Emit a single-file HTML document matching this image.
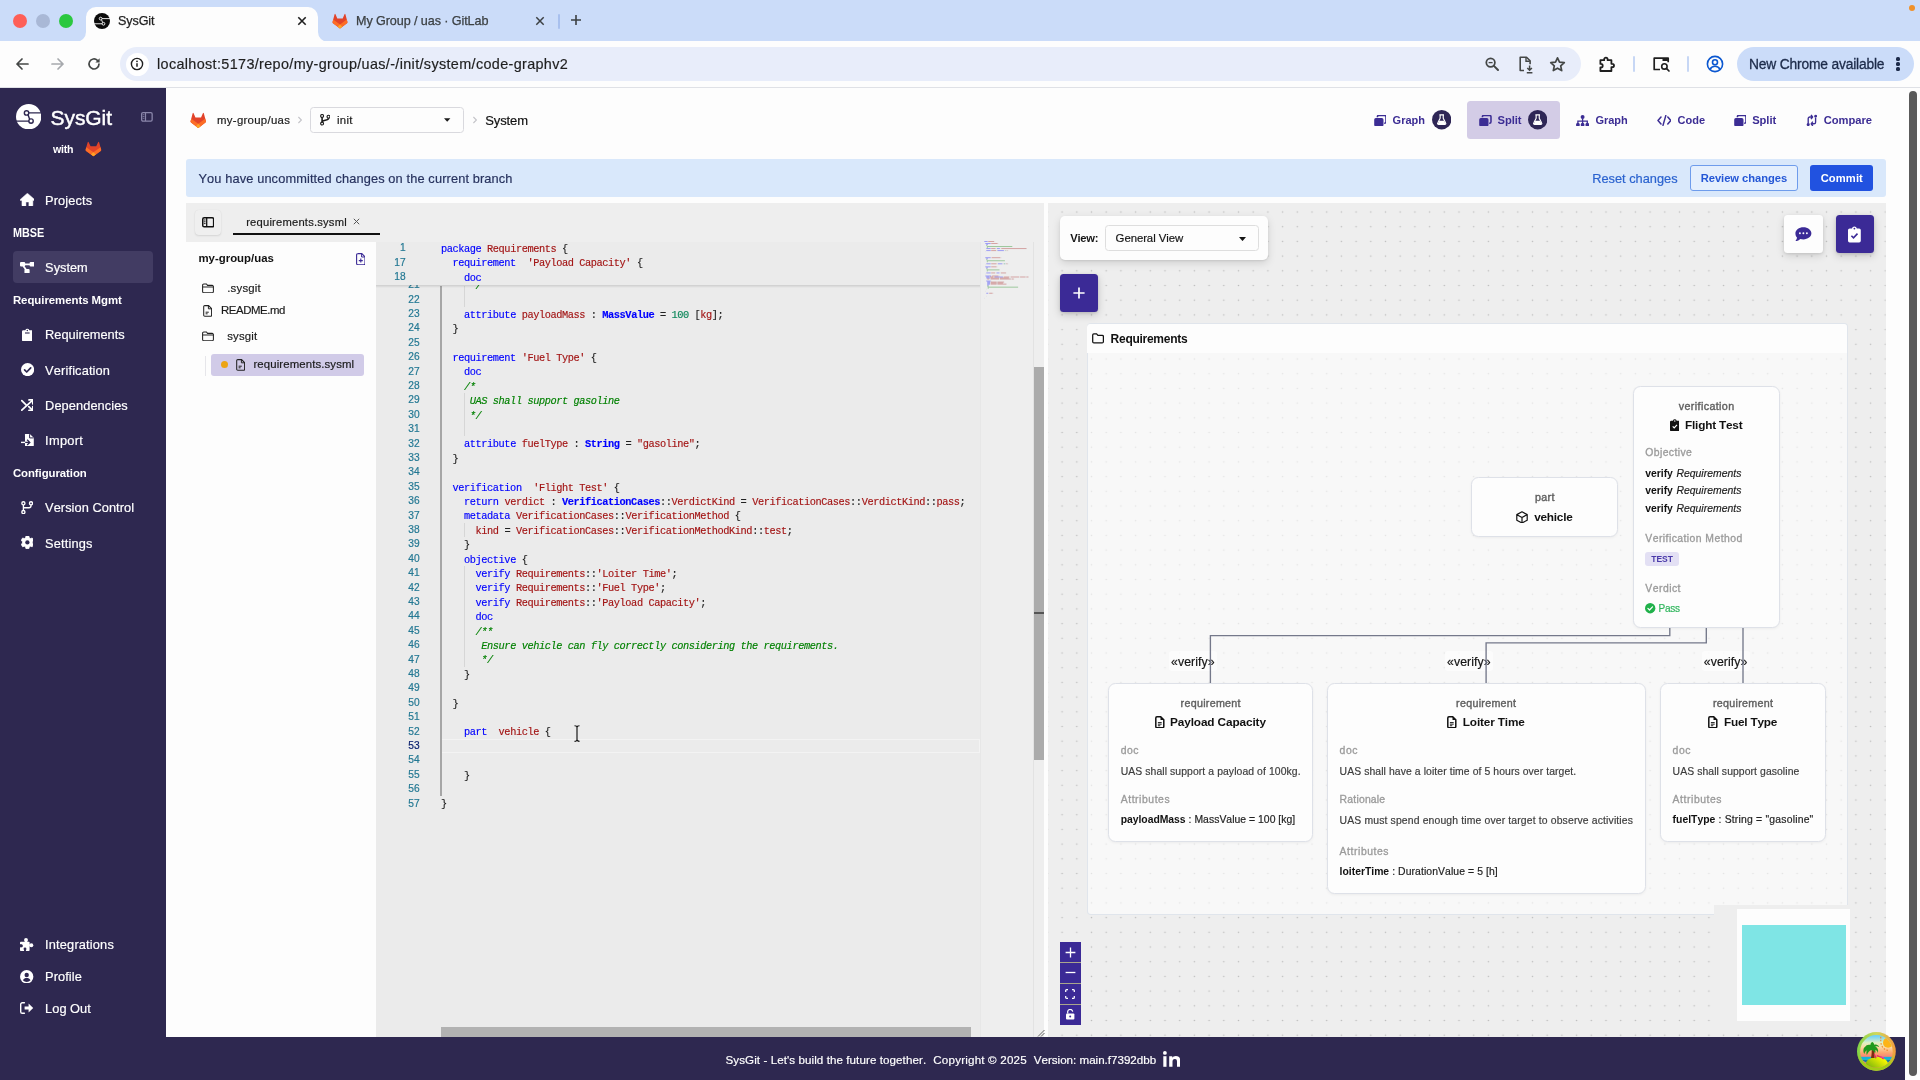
<!DOCTYPE html>
<html lang="en"><head><meta charset="utf-8"><title>SysGit</title>
<style>
*{box-sizing:border-box;margin:0;padding:0}
html,body{width:1920px;height:1080px;overflow:hidden;background:#fff}
body{font-family:"Liberation Sans",sans-serif;font-kerning:none;font-variant-ligatures:none;-webkit-font-smoothing:antialiased}
#root{position:relative;width:1920px;height:1080px;overflow:hidden;background:#fdfdfd;will-change:transform}
.b{position:absolute;display:block}
.t{position:absolute;white-space:pre;line-height:1;display:block}
.r{-webkit-text-stroke-width:.18px}
</style></head>
<body><div id="root">
<!-- s_chrome -->
<div class="b" style="left:0px;top:0px;width:1920px;height:41px;background:#cbdcf9;"></div>
<div class="b" style="left:0px;top:40.5px;width:1920px;height:47px;background:#fdfdfd;border-radius:9px 9px 0 0;"></div>
<div class="b" style="left:0px;top:87px;width:1920px;height:1px;background:#dfe1e6;"></div>
<svg class="b" style="left:76px;top:6px;" width="252" height="36" viewBox="0 0 252 36" preserveAspectRatio="none"><path d="M0 36 A10 10 0 0 0 10 26 V11 A10 10 0 0 1 20 1 H232 A10 10 0 0 1 242 11 V26 A10 10 0 0 0 252 36 Z" fill="#fdfdfd"/></svg>
<div class="b" style="left:13px;top:13.5px;width:14px;height:14px;background:#fe5f57;border-radius:50%;"></div>
<div class="b" style="left:36px;top:13.5px;width:14px;height:14px;background:#a9b8d6;border-radius:50%;"></div>
<div class="b" style="left:59px;top:13.5px;width:14px;height:14px;background:#2bc840;border-radius:50%;"></div>
<svg class="b" style="left:94.00px;top:13.00px;" width="16.00" height="16.00" viewBox="0 0 26 26" preserveAspectRatio="none"><circle cx="13" cy="13" r="13" fill="#0b0b0b"/><g fill="none" stroke="#ffffff" stroke-width="1.45"><path d="M11 9.100H26M0 17.500H15"/><path d="M12.200 10.700 14.100 15.800"/><circle cx="10.800" cy="9.100" r="2.250" fill="#0b0b0b"/><circle cx="15.400" cy="17.500" r="2.250" fill="#0b0b0b"/></g></svg>
<span class="t r" style="left:118.00px;top:15.24px;font-size:12.6px;color:#1f1f1f;letter-spacing:-0.121px;-webkit-text-stroke:.25px #1f1f1f;">SysGit</span>
<svg class="b" style="left:296px;top:15px;" width="12" height="12" viewBox="0 0 12 12" preserveAspectRatio="none"><path d="M2.3 2.3 9.7 9.7M9.7 2.3 2.3 9.7" stroke="#1f1f1f" stroke-width="1.6" fill="none"/></svg>
<svg class="b" style="left:332px;top:13px;" width="16" height="16" viewBox="0 0 16 16" preserveAspectRatio="none"><path d="M8 15.6 1 10.3Q.3 9.7.6 8.8L2.6 1.3Q3 .2 3.5 1.3L5.3 5.4H10.7L12.500 1.300Q13 .2 13.400 1.300L15.400 8.800Q15.700 9.700 15 10.300Z" fill="#e24329"/><path d="M.75 8.300 1.250 6.500 8 11.500 14.750 6.500 15.250 8.300Q15.700 9.700 15 10.300L8 15.600 1 10.300Q.3 9.700.750 8.300Z" fill="#fc6d26"/><path d="M8 11.500 10.300 13.850 8 15.600 5.700 13.850Z" fill="#fca326"/></svg>
<span class="t r" style="left:356.00px;top:15.24px;font-size:12.6px;color:#3c4043;letter-spacing:-0.089px;-webkit-text-stroke:.25px #3c4043;">My Group / uas · GitLab</span>
<svg class="b" style="left:534px;top:15px;" width="12" height="12" viewBox="0 0 12 12" preserveAspectRatio="none"><path d="M2.3 2.3 9.7 9.7M9.7 2.3 2.3 9.7" stroke="#3c4043" stroke-width="1.5" fill="none"/></svg>
<div class="b" style="left:558.3px;top:13.5px;width:1.4px;height:15px;background:#a8c0ee;border-radius:1px;"></div>
<svg class="b" style="left:570px;top:14px;" width="12" height="12" viewBox="0 0 12 12" preserveAspectRatio="none"><path d="M6 1v10M1 6h10" stroke="#3c4043" stroke-width="1.6" fill="none"/></svg>
<div class="b" style="left:1908.5px;top:4.5px;width:6px;height:6px;background:#f0912a;border-radius:50%;"></div>
<svg class="b" style="left:14px;top:56px;" width="16" height="16" viewBox="0 0 16 16" preserveAspectRatio="none"><path d="M14 8H3M8 3 3 8l5 5" stroke="#444746" stroke-width="1.7" fill="none" stroke-linecap="round" stroke-linejoin="round"/></svg>
<svg class="b" style="left:50px;top:56px;" width="16" height="16" viewBox="0 0 16 16" preserveAspectRatio="none"><path d="M2 8h11M8 3l5 5-5 5" stroke="#a6a9ad" stroke-width="1.7" fill="none" stroke-linecap="round" stroke-linejoin="round"/></svg>
<svg class="b" style="left:86px;top:56px;" width="16" height="16" viewBox="0 0 16 16" preserveAspectRatio="none"><path d="M13 8a5 5 0 1 1-1.6-3.7" stroke="#444746" stroke-width="1.7" fill="none" stroke-linecap="round"/><path d="M13.6 2.3v4.2H9.4z" fill="#444746"/></svg>
<div class="b" style="left:120px;top:47px;width:1461px;height:34px;background:#e8edfa;border-radius:17px;"></div>
<div class="b" style="left:125.5px;top:52.5px;width:23px;height:23px;background:#ffffff;border-radius:50%;"></div>
<svg class="b" style="left:130px;top:57px;" width="14" height="14" viewBox="0 0 14 14" preserveAspectRatio="none"><circle cx="7" cy="7" r="5.6" fill="none" stroke="#1f1f1f" stroke-width="1.4"/><path d="M7 6.2v3.6" stroke="#1f1f1f" stroke-width="1.5"/><circle cx="7" cy="4.3" r=".9" fill="#1f1f1f"/></svg>
<span class="t r" style="left:157.00px;top:56.97px;font-size:14.4px;color:#1f1f1f;letter-spacing:0.352px;">localhost:5173/repo/my-group/uas/-/init/system/code-graphv2</span>
<svg class="b" style="left:1484px;top:56px;" width="16" height="16" viewBox="0 0 16 16" preserveAspectRatio="none"><circle cx="6.6" cy="6.6" r="4.3" fill="none" stroke="#444746" stroke-width="1.750"/><path d="M9.900 9.900 14 14" stroke="#444746" stroke-width="2" stroke-linecap="round"/><path d="M4.6 6.6h4" stroke="#444746" stroke-width="1.3"/></svg>
<svg class="b" style="left:1517px;top:55px;" width="18" height="19" viewBox="0 0 18 19" preserveAspectRatio="none"><path d="M7 15.5H3.2V2.2h6.3l3.6 3.6v3.4" fill="none" stroke="#444746" stroke-width="1.6" stroke-linejoin="round"/><path d="M9 2.4v3.8h3.8" fill="none" stroke="#444746" stroke-width="1.4"/><path d="M12.6 10.5v4.6M10.3 13l2.3 2.3 2.3-2.3M9.8 17.8h5.6" fill="none" stroke="#444746" stroke-width="1.5"/></svg>
<svg class="b" style="left:1548.5px;top:55.5px;" width="17" height="17" viewBox="0 0 17 17" preserveAspectRatio="none"><path d="M8.5 1.8l2 4.4 4.8.5-3.6 3.2 1 4.7-4.2-2.4-4.2 2.4 1-4.7L1.7 6.7l4.8-.5z" fill="none" stroke="#444746" stroke-width="1.700" stroke-linejoin="round"/></svg>
<svg class="b" style="left:1598.4px;top:54.6px;" width="18" height="18" viewBox="0 0 18 18" preserveAspectRatio="none"><path d="M2.400 5.200h3.800V4.300a1.700 1.700 0 0 1 3.400 0v.9h3.800v3.600h.9a1.700 1.700 0 0 1 0 3.400h-.9v3.800H2.400v-3.500h.5a1.800 1.800 0 0 0 0-3.600h-.5z" fill="none" stroke="#1f1f1f" stroke-width="1.800" stroke-linejoin="round"/></svg>
<div class="b" style="left:1633.2px;top:56.4px;width:2px;height:15.4px;background:#c7d7f5;border-radius:1px;"></div>
<svg class="b" style="left:1652px;top:55px;" width="19" height="18" viewBox="0 0 19 18" preserveAspectRatio="none"><path d="M8 14.5H2.2V3.2h14v4" fill="none" stroke="#1f1f1f" stroke-width="1.7" stroke-linejoin="round"/><path d="M10.5 3.4h5.4v2.6h-5.4z" fill="#1f1f1f"/><circle cx="12.4" cy="11.4" r="2.7" fill="none" stroke="#1f1f1f" stroke-width="1.6"/><path d="M14.4 13.4l2.6 2.6" stroke="#1f1f1f" stroke-width="1.7" stroke-linecap="round"/></svg>
<div class="b" style="left:1687.2px;top:56.4px;width:2px;height:15.4px;background:#c7d7f5;border-radius:1px;"></div>
<svg class="b" style="left:1706px;top:55px;" width="18" height="18" viewBox="0 0 18 18" preserveAspectRatio="none"><circle cx="9" cy="9" r="7.6" fill="none" stroke="#0b57d0" stroke-width="1.6"/><circle cx="9" cy="7.2" r="2.5" fill="none" stroke="#0b57d0" stroke-width="1.6"/><path d="M4 14.4c1-2.2 2.8-3.1 5-3.1s4 .9 5 3.1" fill="none" stroke="#0b57d0" stroke-width="1.6"/></svg>
<div class="b" style="left:1737px;top:47px;width:177px;height:34px;background:#cbdcf9;border-radius:17px;"></div>
<span class="t r" style="left:1749.00px;top:58.26px;font-size:13.8px;color:#1d2b4a;letter-spacing:-0.175px;-webkit-text-stroke:.3px #1d2b4a;">New Chrome available</span>
<div class="b" style="left:1896.4px;top:57.4px;width:3.2px;height:3.2px;background:#1d2b4a;border-radius:50%;"></div>
<div class="b" style="left:1896.4px;top:62.4px;width:3.2px;height:3.2px;background:#1d2b4a;border-radius:50%;"></div>
<div class="b" style="left:1896.4px;top:67.4px;width:3.2px;height:3.2px;background:#1d2b4a;border-radius:50%;"></div>
<!-- s_sidebar -->
<div class="b" style="left:0px;top:88px;width:166.3px;height:992px;background:#2e2850;"></div>
<svg class="b" style="left:15.80px;top:103.90px;" width="25.40" height="25.40" viewBox="0 0 26 26" preserveAspectRatio="none"><circle cx="13" cy="13" r="13" fill="#ffffff"/><g fill="none" stroke="#2e2850" stroke-width="1.45"><path d="M11 9.100H26M0 17.500H15"/><path d="M12.200 10.700 14.100 15.800"/><circle cx="10.800" cy="9.100" r="2.250" fill="#ffffff"/><circle cx="15.400" cy="17.500" r="2.250" fill="#ffffff"/></g></svg>
<span class="t r" style="left:50.60px;top:107.04px;font-size:21.0px;color:#ffffff;letter-spacing:-0.088px;-webkit-text-stroke:.45px #fff;">SysGit</span>
<svg class="b" style="left:141.1px;top:112.0px;" width="11.8" height="9.8" viewBox="0 0 11.8 9.8" preserveAspectRatio="none"><rect x=".65" y=".65" width="10.5" height="8.5" rx="1.3" fill="none" stroke="#8a86aa" stroke-width="1.3"/><path d="M4.5 .8v8.200" stroke="#8a86aa" stroke-width="1.2"/><path d="M1.700 2.700h1.700M1.700 4.500h1.700M1.700 6.300h1.700" stroke="#8a86aa" stroke-width=".8"/></svg>
<span class="t" style="left:53.00px;top:143.62px;font-size:10.6px;color:#ffffff;font-weight:700;letter-spacing:-0.232px;">with</span>
<svg class="b" style="left:84.8px;top:141.3px;overflow:visible" width="16.8" height="15.6" viewBox="0 0 16 16" preserveAspectRatio="none"><path d="M8 15.6 1 10.3Q.3 9.7.6 8.8L2.6 1.3Q3 .2 3.5 1.3L5.3 5.4H10.7L12.500 1.300Q13 .2 13.400 1.300L15.400 8.800Q15.700 9.700 15 10.300Z" fill="#e24329"/><path d="M.75 8.300 1.250 6.500 8 11.500 14.750 6.500 15.250 8.300Q15.700 9.700 15 10.300L8 15.600 1 10.300Q.3 9.700.750 8.300Z" fill="#fc6d26"/><path d="M8 11.500 10.300 13.850 8 15.600 5.700 13.850Z" fill="#fca326"/></svg>
<div class="b" style="left:12.9px;top:251.2px;width:140.6px;height:31.6px;background:#423c63;border-radius:4px;"></div>
<svg class="b" style="left:19.6px;top:193.1px;" width="14.8" height="13.2" viewBox="0 0 16 14" preserveAspectRatio="none"><path d="M8 .2 .3 6.800a.7.7 0 0 0 .5 1.200h1.300v5.200a.6.6 0 0 0 .6.6h3.700V9.600h3.200v4.200h3.700a.6.6 0 0 0 .6-.6V8h1.300a.7.700 0 0 0 .5-1.200z" fill="#ffffff" stroke="#ffffff" stroke-width=".5" stroke-linejoin="round"/></svg>
<span class="t r" style="left:45.10px;top:195.35px;font-size:12.8px;color:#ffffff;letter-spacing:0.109px;">Projects</span>
<svg class="b" style="left:19.7px;top:261.5px;" width="14.8" height="11.6" viewBox="0 0 16 12.600" preserveAspectRatio="none"><g fill="#ffffff"><rect x="0" y="0" width="5.600" height="5" rx="1.200"/><rect x="10.400" y="0" width="5.600" height="5" rx="1.200"/><rect x="4.800" y="7.600" width="5.600" height="5" rx="1.200"/></g><path d="M5 2.500h6M3.600 4.400l3.400 4.600" stroke="#ffffff" stroke-width="1.900" fill="none"/></svg>
<span class="t r" style="left:45.10px;top:262.35px;font-size:12.8px;color:#ffffff;">System</span>
<svg class="b" style="left:21.7px;top:327.7px;" width="10.6" height="13.4" viewBox="0 0 10.6 13.4" preserveAspectRatio="none"><path d="M1.4 2.2h1.9a2.1 2.1 0 0 1 4 0h1.9a1.4 1.4 0 0 1 1.4 1.4V12a1.4 1.4 0 0 1-1.4 1.4H1.4A1.4 1.4 0 0 1 0 12V3.6a1.4 1.4 0 0 1 1.4-1.4z" fill="#ffffff"/><circle cx="5.3" cy="2.4" r=".75" fill="#2e2850"/><path d="M3 5h4.6" stroke="#2e2850" stroke-width="1.1"/></svg>
<span class="t r" style="left:45.10px;top:329.25px;font-size:12.8px;color:#ffffff;letter-spacing:-0.007px;">Requirements</span>
<svg class="b" style="left:20.5px;top:363.2px;" width="13.2" height="13.2" viewBox="0 0 13.2 13.2" preserveAspectRatio="none"><circle cx="6.6" cy="6.6" r="6.6" fill="#ffffff"/><path d="M3.6 6.9l2.1 2.1 4-4.2" stroke="#2e2850" stroke-width="1.7" fill="none" stroke-linecap="round" stroke-linejoin="round"/></svg>
<span class="t r" style="left:45.10px;top:364.75px;font-size:12.8px;color:#ffffff;letter-spacing:0.144px;">Verification</span>
<svg class="b" style="left:20.7px;top:398.8px;" width="12.8" height="12.4" viewBox="0 0 12.8 12.4" preserveAspectRatio="none"><g stroke="#ffffff" stroke-width="1.750" fill="none" stroke-linecap="round" stroke-linejoin="round"><path d="M.8 1.6l4 4M7.8 7.6l3.4 3.4M.8 11.2 11.4 1.4"/><path d="M8 1h3.8v3.8M8 11.4h3.8V7.6"/></g></svg>
<span class="t r" style="left:45.10px;top:399.85px;font-size:12.8px;color:#ffffff;letter-spacing:0.078px;">Dependencies</span>
<svg class="b" style="left:20.6px;top:433.6px;" width="13" height="12.8" viewBox="0 0 13 12.8" preserveAspectRatio="none"><path d="M4.2 0h4.6l4 3.8v7.4a1.6 1.6 0 0 1-1.6 1.6H5.6A1.6 1.6 0 0 1 4 11.2V9.1h3.2l-1.5 1.5.9.9 3.1-3.1-3.1-3.1-.9.9L7.2 7.7H4V1.6A1.6 1.6 0 0 1 4.2 0z" fill="#ffffff"/><path d="M0 8.4h4.2" stroke="#ffffff" stroke-width="1.4"/><path d="M8.6.2v3.7h4" stroke="#2e2850" stroke-width="1" fill="none"/></svg>
<span class="t r" style="left:45.10px;top:435.25px;font-size:12.8px;color:#ffffff;letter-spacing:0.305px;">Import</span>
<svg class="b" style="left:20.8px;top:500.8px;" width="12.4" height="13.4" viewBox="0 0 12.4 13.4" preserveAspectRatio="none"><g stroke="#ffffff" stroke-width="1.35" fill="none"><circle cx="2.4" cy="2.3" r="1.55"/><circle cx="2.4" cy="11.1" r="1.55"/><circle cx="10" cy="2.3" r="1.55"/><path d="M2.4 3.900v5.600M10 3.900v.9a2 2 0 0 1-2 2H2.400"/></g></svg>
<span class="t r" style="left:45.10px;top:502.35px;font-size:12.8px;color:#ffffff;letter-spacing:0.049px;">Version Control</span>
<svg class="b" style="left:20.7px;top:536.2px;" width="12.8" height="12.8" viewBox="0 0 12.8 12.8" preserveAspectRatio="none"><path d="M12.74 4.98 L12.74 7.82 L10.96 8.20 L10.24 9.44 L10.80 11.18 L8.34 12.60 L7.12 11.25 L5.68 11.25 L4.46 12.60 L2.00 11.18 L2.56 9.44 L1.84 8.20 L0.06 7.82 L0.06 4.98 L1.84 4.60 L2.56 3.36 L2.00 1.62 L4.46 0.20 L5.68 1.55 L7.12 1.55 L8.34 0.20 L10.80 1.62 L10.24 3.36 L10.96 4.60Z" fill="#ffffff" stroke="#ffffff" stroke-width=".7" stroke-linejoin="round" transform="rotate(30 6.400 6.400)"/><circle cx="6.400" cy="6.400" r="2.150" fill="#2e2850"/></svg>
<span class="t r" style="left:45.10px;top:537.55px;font-size:12.8px;color:#ffffff;letter-spacing:0.150px;">Settings</span>
<svg class="b" style="left:20.2px;top:937.8px;" width="13.4" height="13" viewBox="0 0 13.4 13" preserveAspectRatio="none"><g fill="#ffffff"><rect x="0" y="3.800" width="9.600" height="9.200" rx=".8"/><circle cx="6" cy="2.050" r="1.950"/><rect x="4.900" y="2.100" width="2.200" height="2"/><circle cx="11.350" cy="7.300" r="1.950"/><rect x="9.400" y="6.200" width="2" height="2.200"/></g><g fill="#2e2850"><circle cx="1.400" cy="7.800" r="1.500"/><rect x="-.1" y="6.300" width="1.500" height="3"/><circle cx="5" cy="10.900" r="1.450"/><rect x="4.050" y="10.900" width="1.900" height="2.200"/></g></svg>
<span class="t r" style="left:45.10px;top:939.35px;font-size:12.8px;color:#ffffff;letter-spacing:0.165px;">Integrations</span>
<svg class="b" style="left:20.4px;top:969.9px;" width="13.4" height="13.4" viewBox="0 0 13.4 13.4" preserveAspectRatio="none"><circle cx="6.7" cy="6.7" r="6.7" fill="#ffffff"/><circle cx="6.7" cy="5" r="2.2" fill="#2e2850"/><path d="M2.9 10.3c.8-1.7 2.2-2.3 3.8-2.3s3 .6 3.8 2.3a5.2 5.2 0 0 1-7.6 0z" fill="#2e2850"/></svg>
<span class="t r" style="left:45.10px;top:971.35px;font-size:12.8px;color:#ffffff;letter-spacing:0.070px;">Profile</span>
<svg class="b" style="left:20.3px;top:1002.3px;" width="13.6" height="12" viewBox="0 0 13.6 12" preserveAspectRatio="none"><path d="M4.4.7H2.3A1.6 1.6 0 0 0 .7 2.3v7.4a1.6 1.6 0 0 0 1.6 1.6h2.1" stroke="#ffffff" stroke-width="1.4" fill="none" stroke-linecap="round"/><path d="M8.6 1.6 13.2 6l-4.6 4.4V7.6H4.6V4.4h4z" fill="#ffffff"/></svg>
<span class="t r" style="left:45.10px;top:1003.35px;font-size:12.8px;color:#ffffff;letter-spacing:0.026px;">Log Out</span>
<span class="t" style="left:12.90px;top:227.14px;font-size:12.4px;color:#ffffff;font-weight:700;transform:scaleX(0.8737);transform-origin:0 50%;">MBSE</span>
<span class="t" style="left:12.90px;top:295.03px;font-size:11.4px;color:#ffffff;font-weight:700;letter-spacing:-0.030px;">Requirements Mgmt</span>
<span class="t" style="left:12.90px;top:468.23px;font-size:11.4px;color:#ffffff;font-weight:700;letter-spacing:-0.068px;">Configuration</span>
<!-- s_header -->
<svg class="b" style="left:190px;top:111.5px;" width="16.5" height="16.5" viewBox="0 0 16 16" preserveAspectRatio="none"><path d="M8 15.6 1 10.3Q.3 9.7.6 8.8L2.6 1.3Q3 .2 3.5 1.3L5.3 5.4H10.7L12.500 1.300Q13 .2 13.400 1.300L15.400 8.800Q15.700 9.700 15 10.300Z" fill="#e24329"/><path d="M.75 8.300 1.250 6.500 8 11.500 14.750 6.500 15.250 8.300Q15.700 9.700 15 10.300L8 15.600 1 10.300Q.3 9.700.750 8.300Z" fill="#fc6d26"/><path d="M8 11.500 10.300 13.850 8 15.600 5.700 13.850Z" fill="#fca326"/></svg>
<span class="t r" style="left:217.00px;top:114.63px;font-size:11.4px;color:#1a1a1a;letter-spacing:0.300px;">my-group/uas</span>
<svg class="b" style="left:296.5px;top:116px;" width="6" height="8" viewBox="0 0 6 8" preserveAspectRatio="none"><path d="M1.4 1l3 3-3 3" stroke="#c3c3c8" stroke-width="1.1" fill="none"/></svg>
<div class="b" style="left:310px;top:107px;width:153.6px;height:25.6px;background:#fdfdfd;border:1px solid #d9d9de;border-radius:3.5px;"></div>
<svg class="b" style="left:319.6px;top:114.3px;" width="10.6" height="11.6" viewBox="0 0 10.6 11.6" preserveAspectRatio="none"><g stroke="#1a1a1a" fill="none"><g stroke-width="1.15"><circle cx="2.1" cy="2" r="1.45"/><circle cx="2.1" cy="9.6" r="1.45"/><circle cx="8.5" cy="2.7" r="1.45"/></g><path d="M2.1 3.5v4.6M8.5 4.2c0 2.600-6.400 1.600-6.400 4" stroke-width="1.6"/></g></svg>
<span class="t r" style="left:337.00px;top:114.63px;font-size:11.4px;color:#1a1a1a;letter-spacing:0.309px;">init</span>
<svg class="b" style="left:444.3px;top:118.2px;" width="6.4" height="4" viewBox="0 0 7 4.400" preserveAspectRatio="none"><path d="M0 .2h7L3.500 4.200z" fill="#1a1a1a"/></svg>
<svg class="b" style="left:471.5px;top:116px;" width="6" height="8" viewBox="0 0 6 8" preserveAspectRatio="none"><path d="M1.4 1l3 3-3 3" stroke="#c3c3c8" stroke-width="1.1" fill="none"/></svg>
<span class="t r" style="left:485.20px;top:114.05px;font-size:13.0px;color:#111;letter-spacing:-0.108px;">System</span>
<div class="b" style="left:1466.7px;top:101.2px;width:93px;height:37.6px;background:#d3cce6;border-radius:3.5px;"></div>
<svg class="b" style="left:1373.8px;top:114.8px;" width="12.4" height="11.6" viewBox="0 0 12.4 11.6" preserveAspectRatio="none"><path d="M3.4 2.2V1.8A1.4 1.4 0 0 1 4.8.4h5.8A1.4 1.4 0 0 1 12 1.8v5a1.4 1.4 0 0 1-1.4 1.4h-.4" fill="none" stroke="#3c2d94" stroke-width="1.55"/><rect x=".2" y="3" width="9.300" height="8.400" rx="1.700" fill="#3c2d94"/></svg>
<span class="t" style="left:1392.60px;top:115.43px;font-size:11.0px;color:#3c2d94;font-weight:700;">Graph</span>
<svg class="b" style="left:1431.50px;top:110.40px;" width="19.4" height="19.4" viewBox="0 0 20 20" preserveAspectRatio="none"><circle cx="10" cy="10" r="10" fill="#2e2656"/><path d="M7.6 5h4.8M8.4 5v3.6L5.9 13.4a1 1 0 0 0 .9 1.5h6.4a1 1 0 0 0 .9-1.5L11.6 8.6V5" fill="none" stroke="#fff" stroke-width="1.2" stroke-linejoin="round"/><path d="M7.6 11h4.8l1.3 2.6a.6.6 0 0 1-.5.9H6.8a.6.6 0 0 1-.5-.9z" fill="#fff"/></svg>
<svg class="b" style="left:1479.2px;top:114.8px;" width="12.4" height="11.6" viewBox="0 0 12.4 11.6" preserveAspectRatio="none"><path d="M3.4 2.2V1.8A1.4 1.4 0 0 1 4.8.4h5.8A1.4 1.4 0 0 1 12 1.8v5a1.4 1.4 0 0 1-1.4 1.4h-.4" fill="none" stroke="#3c2d94" stroke-width="1.55"/><rect x=".2" y="3" width="9.300" height="8.400" rx="1.700" fill="#3c2d94"/></svg>
<span class="t" style="left:1497.60px;top:115.33px;font-size:11.2px;color:#3c2d94;font-weight:700;letter-spacing:-0.066px;">Split</span>
<svg class="b" style="left:1528.00px;top:110.40px;" width="19.4" height="19.4" viewBox="0 0 20 20" preserveAspectRatio="none"><circle cx="10" cy="10" r="10" fill="#2e2656"/><path d="M7.6 5h4.8M8.4 5v3.6L5.9 13.4a1 1 0 0 0 .9 1.5h6.4a1 1 0 0 0 .9-1.5L11.6 8.6V5" fill="none" stroke="#fff" stroke-width="1.2" stroke-linejoin="round"/><path d="M7.6 11h4.8l1.3 2.6a.6.6 0 0 1-.5.9H6.8a.6.6 0 0 1-.5-.9z" fill="#fff"/></svg>
<svg class="b" style="left:1575.6px;top:114.6px;" width="13.2" height="11.8" viewBox="0 0 13.2 11.8" preserveAspectRatio="none"><g fill="#3c2d94"><circle cx="6.6" cy="2" r="2"/><circle cx="1.900" cy="9.700" r="1.900"/><circle cx="6.600" cy="9.700" r="1.900"/><circle cx="11.300" cy="9.700" r="1.900"/></g><path d="M6.600 3.400v5M1.900 8.200V6.200h9.400v2" stroke="#3c2d94" stroke-width="1.300" fill="none"/></svg>
<span class="t" style="left:1595.60px;top:115.43px;font-size:11.0px;color:#3c2d94;font-weight:700;letter-spacing:-0.098px;">Graph</span>
<svg class="b" style="left:1656.6px;top:114.6px;" width="14.8" height="11" viewBox="0 0 14.8 11" preserveAspectRatio="none"><path d="M4 2 1 5.5 4 9M10.8 2l3 3.5-3 3.5M8.8.6 6 10.4" stroke="#3c2d94" stroke-width="1.5" fill="none" stroke-linecap="round" stroke-linejoin="round"/></svg>
<span class="t" style="left:1677.60px;top:115.43px;font-size:11.0px;color:#3c2d94;font-weight:700;letter-spacing:-0.033px;">Code</span>
<svg class="b" style="left:1734px;top:114.8px;" width="12.4" height="11.6" viewBox="0 0 12.4 11.6" preserveAspectRatio="none"><path d="M3.4 2.2V1.8A1.4 1.4 0 0 1 4.8.4h5.8A1.4 1.4 0 0 1 12 1.8v5a1.4 1.4 0 0 1-1.4 1.4h-.4" fill="none" stroke="#3c2d94" stroke-width="1.55"/><rect x=".2" y="3" width="9.300" height="8.400" rx="1.700" fill="#3c2d94"/></svg>
<span class="t" style="left:1752.20px;top:115.33px;font-size:11.2px;color:#3c2d94;font-weight:700;letter-spacing:-0.066px;">Split</span>
<svg class="b" style="left:1805.6px;top:113.6px;" width="11.8" height="12.8" viewBox="0 0 11.8 12.8" preserveAspectRatio="none"><g stroke="#3c2d94" stroke-width="1.35" fill="none" stroke-linejoin="round"><path d="M2.2 9V4.6a1.6 1.6 0 0 1 1.6-1.6h2.4M5 .8l1.6 2.2L5 5.2"/><path d="M9.6 3.8v4.4a1.6 1.6 0 0 1-1.6 1.6H5.6M6.8 7.6 5.2 9.8l1.6 2.2"/></g><circle cx="2.2" cy="10.6" r="1.5" fill="#3c2d94"/><circle cx="9.6" cy="2.2" r="1.5" fill="#3c2d94"/></svg>
<span class="t" style="left:1823.80px;top:115.33px;font-size:11.2px;color:#3c2d94;font-weight:700;letter-spacing:-0.058px;">Compare</span>
<div class="b" style="left:185.6px;top:158.8px;width:1700.2px;height:38px;background:#d9e8fb;border-radius:3px;"></div>
<span class="t r" style="left:198.40px;top:172.85px;font-size:12.8px;color:#27325e;letter-spacing:0.124px;">You have uncommitted changes on the current branch</span>
<span class="t r" style="left:1592.20px;top:172.65px;font-size:12.8px;color:#2a62cf;">Reset changes</span>
<div class="b" style="left:1690px;top:165px;width:108px;height:25.6px;background:#e4effd;border:1px solid #6e9cec;border-radius:3px;"></div>
<span class="t" style="left:1700.70px;top:172.93px;font-size:11.2px;color:#2457d6;font-weight:700;letter-spacing:-0.042px;">Review changes</span>
<div class="b" style="left:1810.4px;top:165px;width:62.8px;height:25.6px;background:#2152e0;border-radius:3px;"></div>
<span class="t" style="left:1820.70px;top:172.93px;font-size:11.2px;color:#ffffff;font-weight:700;letter-spacing:0.102px;">Commit</span>
<div class="b" style="left:1886px;top:88px;width:34px;height:992px;background:#fdfdfd;"></div>
<div class="b" style="left:1909.0px;top:91px;width:8.0px;height:985px;background:#5a5a5a;border-radius:4px;"></div>
<!-- s_editor -->
<div class="b" style="left:185.6px;top:203px;width:858.6px;height:38.6px;background:#eeeeee;"></div>
<div class="b" style="left:194.6px;top:210px;width:26.4px;height:25px;background:#efefef;border-radius:4px;box-shadow:0 1px 2px rgba(0,0,0,.10),0 0 1px rgba(0,0,0,.08);"></div>
<svg class="b" style="left:201.8px;top:217.2px;" width="12.4" height="10.6" viewBox="0 0 12.4 10.6" preserveAspectRatio="none"><rect x=".75" y=".75" width="10.900" height="9.100" rx="1.400" fill="none" stroke="#111" stroke-width="1.500"/><path d="M4.700 .8v9" stroke="#111" stroke-width="1.300"/><path d="M1.900 3h1.700M1.900 4.800h1.700M1.900 6.600h1.700" stroke="#111" stroke-width=".9"/></svg>
<span class="t r" style="left:246.20px;top:216.53px;font-size:11.2px;color:#1a1a1a;letter-spacing:0.206px;">requirements.sysml</span>
<svg class="b" style="left:353.4px;top:218.2px;" width="7" height="7" viewBox="0 0 7 7" preserveAspectRatio="none"><path d="M.8.8l5.4 5.4M6.2.8.8 6.2" stroke="#555" stroke-width="1" fill="none"/></svg>
<div class="b" style="left:233.4px;top:233px;width:146.4px;height:2px;background:#111111;"></div>
<div class="b" style="left:185.6px;top:241.6px;width:190.8px;height:795.4px;background:#fdfdfd;"></div>
<span class="t" style="left:198.40px;top:253.43px;font-size:11.4px;color:#111;font-weight:700;letter-spacing:0.020px;">my-group/uas</span>
<svg class="b" style="left:355.6px;top:252.6px;" width="9.6" height="12.4" viewBox="0 0 9.6 12.4" preserveAspectRatio="none"><path d="M1.6.6h4.2l3.2 3.2v6.8a1.2 1.2 0 0 1-1.2 1.2H1.8A1.2 1.2 0 0 1 .6 10.6V1.8A1.2 1.2 0 0 1 1.8.6z" fill="none" stroke="#3b2a96" stroke-width="1.1"/><path d="M5.6.8v3.2h3.2" fill="none" stroke="#3b2a96" stroke-width="1"/><path d="M4.8 5.6v4M2.8 7.6h4" stroke="#3b2a96" stroke-width="1.1"/></svg>
<svg class="b" style="left:202px;top:282.6px;" width="12" height="10.6" viewBox="0 0 12 10.6" preserveAspectRatio="none"><path d="M.6 2.2A1.2 1.2 0 0 1 1.8 1h2.6l1.2 1.4h4.6a1.2 1.2 0 0 1 1.2 1.2v5A1.2 1.2 0 0 1 10.2 9.8H1.8A1.2 1.2 0 0 1 .6 8.6z" fill="none" stroke="#222" stroke-width="1.05"/><path d="M.8 4h10.4" stroke="#222" stroke-width="1"/></svg>
<span class="t r" style="left:227.20px;top:282.83px;font-size:11.4px;color:#1a1a1a;letter-spacing:0.215px;">.sysgit</span>
<svg class="b" style="left:203px;top:304.8px;" width="9.4" height="12" viewBox="0 0 9.4 12" preserveAspectRatio="none"><path d="M1.8.6h3.8l3 3v6.6a1.1 1.1 0 0 1-1.1 1.1H1.8A1.1 1.1 0 0 1 .7 10.2V1.7A1.1 1.1 0 0 1 1.8.6z" fill="none" stroke="#222" stroke-width="1.05"/><path d="M5.4.8v3h3" fill="none" stroke="#222" stroke-width="1"/><path d="M2.6 7.2h3.2M2.6 8.8h2" stroke="#222" stroke-width="1"/></svg>
<span class="t r" style="left:221.00px;top:305.43px;font-size:11.4px;color:#1a1a1a;letter-spacing:-0.422px;">README.md</span>
<svg class="b" style="left:202px;top:330.8px;" width="12" height="10.6" viewBox="0 0 12 10.6" preserveAspectRatio="none"><path d="M.6 2.2A1.2 1.2 0 0 1 1.8 1h2.6l1.2 1.4h4.6a1.2 1.2 0 0 1 1.2 1.2v5A1.2 1.2 0 0 1 10.2 9.8H1.8A1.2 1.2 0 0 1 .6 8.6z" fill="none" stroke="#222" stroke-width="1.05"/><path d="M.8 4h10.4" stroke="#222" stroke-width="1"/></svg>
<span class="t r" style="left:227.20px;top:331.03px;font-size:11.4px;color:#1a1a1a;letter-spacing:0.172px;">sysgit</span>
<div class="b" style="left:205.4px;top:356px;width:1px;height:20px;background:#e6e6ea;"></div>
<div class="b" style="left:211.2px;top:353.6px;width:152.8px;height:22.2px;background:#d1cbe8;border-radius:3px;"></div>
<div class="b" style="left:221px;top:361px;width:7px;height:7px;background:#eca413;border-radius:50%;"></div>
<svg class="b" style="left:235.8px;top:358.8px;" width="9.4" height="12" viewBox="0 0 9.4 12" preserveAspectRatio="none"><path d="M1.8.6h3.8l3 3v6.6a1.1 1.1 0 0 1-1.1 1.1H1.8A1.1 1.1 0 0 1 .7 10.2V1.7A1.1 1.1 0 0 1 1.8.6z" fill="none" stroke="#222" stroke-width="1.05"/><path d="M5.4.8v3h3" fill="none" stroke="#222" stroke-width="1"/><path d="M2.6 7.2h3.2M2.6 8.8h2" stroke="#222" stroke-width="1"/></svg>
<span class="t r" style="left:253.40px;top:359.03px;font-size:11.4px;color:#1a1a1a;letter-spacing:0.116px;">requirements.sysml</span>
<div class="b" style="left:376.4px;top:241.8px;width:667.8px;height:795.2px;background:#ebebeb;"></div>
<div class="b" style="left:441px;top:739.4px;width:539px;height:13.6px;background:transparent;border:1px solid #f3f3f3;border-left:0;"></div>
<div class="b" style="left:440.4px;top:286px;width:1.6px;height:510.4px;background:#a6a6a6;"></div>
<div class="b" style="left:463.85px;top:286.00px;width:1px;height:20.80px;background:#d6d6d6;"></div>
<div class="b" style="left:463.85px;top:393.20px;width:1px;height:43.20px;background:#d6d6d6;"></div>
<div class="b" style="left:463.85px;top:522.80px;width:1px;height:14.40px;background:#d6d6d6;"></div>
<div class="b" style="left:463.85px;top:566.00px;width:1px;height:100.80px;background:#d6d6d6;"></div>
<style>.m{font-family:"Liberation Mono",monospace;font-size:10.3px;letter-spacing:-0.419px;-webkit-text-stroke-width:.15px}</style>
<span class="t r" style="left:408.28px;top:280.28px;font-size:10.2px;color:#237893;font-family:"Liberation Mono",monospace;letter-spacing:-0.718px;">21</span>
<span class="t m" style="left:469.81px;top:280.91px;color:#008000;font-style:italic;">*/</span>
<span class="t r" style="left:408.28px;top:294.68px;font-size:10.2px;color:#237893;font-family:"Liberation Mono",monospace;letter-spacing:-0.718px;">22</span>
<span class="t r" style="left:408.28px;top:309.08px;font-size:10.2px;color:#237893;font-family:"Liberation Mono",monospace;letter-spacing:-0.718px;">23</span>
<span class="t m" style="left:464.05px;top:309.71px;color:#0000ff;">attribute</span>
<span class="t m" style="left:521.67px;top:309.71px;color:#a31515;">payloadMass</span>
<span class="t m" style="left:590.81px;top:309.71px;color:#222222;">: </span>
<span class="t m" style="left:602.34px;top:309.71px;color:#0000ff;font-weight:700;">MassValue</span>
<span class="t m" style="left:659.96px;top:309.71px;color:#222222;">= </span>
<span class="t m" style="left:671.48px;top:309.71px;color:#098658;">100</span>
<span class="t m" style="left:694.53px;top:309.71px;color:#222222;">[</span>
<span class="t m" style="left:700.29px;top:309.71px;color:#a31515;">kg</span>
<span class="t m" style="left:711.81px;top:309.71px;color:#222222;">];</span>
<span class="t r" style="left:408.28px;top:323.48px;font-size:10.2px;color:#237893;font-family:"Liberation Mono",monospace;letter-spacing:-0.718px;">24</span>
<span class="t m" style="left:452.52px;top:324.11px;color:#222222;">}</span>
<span class="t r" style="left:408.28px;top:337.88px;font-size:10.2px;color:#237893;font-family:"Liberation Mono",monospace;letter-spacing:-0.718px;">25</span>
<span class="t r" style="left:408.28px;top:352.28px;font-size:10.2px;color:#237893;font-family:"Liberation Mono",monospace;letter-spacing:-0.718px;">26</span>
<span class="t m" style="left:452.52px;top:352.91px;color:#0000ff;">requirement</span>
<span class="t m" style="left:521.67px;top:352.91px;color:#a31515;">'Fuel Type'</span>
<span class="t m" style="left:590.81px;top:352.91px;color:#222222;">{</span>
<span class="t r" style="left:408.28px;top:366.68px;font-size:10.2px;color:#237893;font-family:"Liberation Mono",monospace;letter-spacing:-0.718px;">27</span>
<span class="t m" style="left:464.05px;top:367.31px;color:#0000ff;">doc</span>
<span class="t r" style="left:408.28px;top:381.08px;font-size:10.2px;color:#237893;font-family:"Liberation Mono",monospace;letter-spacing:-0.718px;">28</span>
<span class="t m" style="left:464.05px;top:381.71px;color:#008000;font-style:italic;">/*</span>
<span class="t r" style="left:408.28px;top:395.48px;font-size:10.2px;color:#237893;font-family:"Liberation Mono",monospace;letter-spacing:-0.718px;">29</span>
<span class="t m" style="left:469.81px;top:396.11px;color:#008000;font-style:italic;">UAS shall support gasoline</span>
<span class="t r" style="left:408.28px;top:409.88px;font-size:10.2px;color:#237893;font-family:"Liberation Mono",monospace;letter-spacing:-0.718px;">30</span>
<span class="t m" style="left:469.81px;top:410.51px;color:#008000;font-style:italic;">*/</span>
<span class="t r" style="left:408.28px;top:424.28px;font-size:10.2px;color:#237893;font-family:"Liberation Mono",monospace;letter-spacing:-0.718px;">31</span>
<span class="t r" style="left:408.28px;top:438.68px;font-size:10.2px;color:#237893;font-family:"Liberation Mono",monospace;letter-spacing:-0.718px;">32</span>
<span class="t m" style="left:464.05px;top:439.31px;color:#0000ff;">attribute</span>
<span class="t m" style="left:521.67px;top:439.31px;color:#a31515;">fuelType</span>
<span class="t m" style="left:573.53px;top:439.31px;color:#222222;">: </span>
<span class="t m" style="left:585.05px;top:439.31px;color:#0000ff;font-weight:700;">String</span>
<span class="t m" style="left:625.38px;top:439.31px;color:#222222;">= </span>
<span class="t m" style="left:636.91px;top:439.31px;color:#a31515;">"gasoline"</span>
<span class="t m" style="left:694.53px;top:439.31px;color:#222222;">;</span>
<span class="t r" style="left:408.28px;top:453.08px;font-size:10.2px;color:#237893;font-family:"Liberation Mono",monospace;letter-spacing:-0.718px;">33</span>
<span class="t m" style="left:452.52px;top:453.71px;color:#222222;">}</span>
<span class="t r" style="left:408.28px;top:467.48px;font-size:10.2px;color:#237893;font-family:"Liberation Mono",monospace;letter-spacing:-0.718px;">34</span>
<span class="t r" style="left:408.28px;top:481.88px;font-size:10.2px;color:#237893;font-family:"Liberation Mono",monospace;letter-spacing:-0.718px;">35</span>
<span class="t m" style="left:452.52px;top:482.51px;color:#0000ff;">verification</span>
<span class="t m" style="left:533.19px;top:482.51px;color:#a31515;">'Flight Test'</span>
<span class="t m" style="left:613.86px;top:482.51px;color:#222222;">{</span>
<span class="t r" style="left:408.28px;top:496.28px;font-size:10.2px;color:#237893;font-family:"Liberation Mono",monospace;letter-spacing:-0.718px;">36</span>
<span class="t m" style="left:464.05px;top:496.91px;color:#0000ff;">return</span>
<span class="t m" style="left:504.38px;top:496.91px;color:#a31515;">verdict</span>
<span class="t m" style="left:550.48px;top:496.91px;color:#222222;">: </span>
<span class="t m" style="left:562.00px;top:496.91px;color:#0000ff;font-weight:700;">VerificationCases</span>
<span class="t m" style="left:659.96px;top:496.91px;color:#222222;">::</span>
<span class="t m" style="left:671.48px;top:496.91px;color:#a31515;">VerdictKind</span>
<span class="t m" style="left:740.62px;top:496.91px;color:#222222;">= </span>
<span class="t m" style="left:752.15px;top:496.91px;color:#a31515;">VerificationCases</span>
<span class="t m" style="left:850.10px;top:496.91px;color:#222222;">::</span>
<span class="t m" style="left:861.63px;top:496.91px;color:#a31515;">VerdictKind</span>
<span class="t m" style="left:925.01px;top:496.91px;color:#222222;">::</span>
<span class="t m" style="left:936.53px;top:496.91px;color:#a31515;">pass</span>
<span class="t m" style="left:959.58px;top:496.91px;color:#222222;">;</span>
<span class="t r" style="left:408.28px;top:510.68px;font-size:10.2px;color:#237893;font-family:"Liberation Mono",monospace;letter-spacing:-0.718px;">37</span>
<span class="t m" style="left:464.05px;top:511.31px;color:#0000ff;">metadata</span>
<span class="t m" style="left:515.91px;top:511.31px;color:#a31515;">VerificationCases</span>
<span class="t m" style="left:613.86px;top:511.31px;color:#222222;">::</span>
<span class="t m" style="left:625.38px;top:511.31px;color:#a31515;">VerificationMethod</span>
<span class="t m" style="left:734.86px;top:511.31px;color:#222222;">{</span>
<span class="t r" style="left:408.28px;top:525.08px;font-size:10.2px;color:#237893;font-family:"Liberation Mono",monospace;letter-spacing:-0.718px;">38</span>
<span class="t m" style="left:475.57px;top:525.71px;color:#a31515;">kind</span>
<span class="t m" style="left:504.38px;top:525.71px;color:#222222;">= </span>
<span class="t m" style="left:515.91px;top:525.71px;color:#a31515;">VerificationCases</span>
<span class="t m" style="left:613.86px;top:525.71px;color:#222222;">::</span>
<span class="t m" style="left:625.38px;top:525.71px;color:#a31515;">VerificationMethodKind</span>
<span class="t m" style="left:752.15px;top:525.71px;color:#222222;">::</span>
<span class="t m" style="left:763.67px;top:525.71px;color:#a31515;">test</span>
<span class="t m" style="left:786.72px;top:525.71px;color:#222222;">;</span>
<span class="t r" style="left:408.28px;top:539.48px;font-size:10.2px;color:#237893;font-family:"Liberation Mono",monospace;letter-spacing:-0.718px;">39</span>
<span class="t m" style="left:464.05px;top:540.11px;color:#222222;">}</span>
<span class="t r" style="left:408.28px;top:553.88px;font-size:10.2px;color:#237893;font-family:"Liberation Mono",monospace;letter-spacing:-0.718px;">40</span>
<span class="t m" style="left:464.05px;top:554.51px;color:#0000ff;">objective</span>
<span class="t m" style="left:521.67px;top:554.51px;color:#222222;">{</span>
<span class="t r" style="left:408.28px;top:568.28px;font-size:10.2px;color:#237893;font-family:"Liberation Mono",monospace;letter-spacing:-0.718px;">41</span>
<span class="t m" style="left:475.57px;top:568.91px;color:#0000ff;">verify</span>
<span class="t m" style="left:515.91px;top:568.91px;color:#a31515;">Requirements</span>
<span class="t m" style="left:585.05px;top:568.91px;color:#222222;">::</span>
<span class="t m" style="left:596.57px;top:568.91px;color:#a31515;">'Loiter Time'</span>
<span class="t m" style="left:671.48px;top:568.91px;color:#222222;">;</span>
<span class="t r" style="left:408.28px;top:582.68px;font-size:10.2px;color:#237893;font-family:"Liberation Mono",monospace;letter-spacing:-0.718px;">42</span>
<span class="t m" style="left:475.57px;top:583.31px;color:#0000ff;">verify</span>
<span class="t m" style="left:515.91px;top:583.31px;color:#a31515;">Requirements</span>
<span class="t m" style="left:585.05px;top:583.31px;color:#222222;">::</span>
<span class="t m" style="left:596.57px;top:583.31px;color:#a31515;">'Fuel Type'</span>
<span class="t m" style="left:659.96px;top:583.31px;color:#222222;">;</span>
<span class="t r" style="left:408.28px;top:597.08px;font-size:10.2px;color:#237893;font-family:"Liberation Mono",monospace;letter-spacing:-0.718px;">43</span>
<span class="t m" style="left:475.57px;top:597.71px;color:#0000ff;">verify</span>
<span class="t m" style="left:515.91px;top:597.71px;color:#a31515;">Requirements</span>
<span class="t m" style="left:585.05px;top:597.71px;color:#222222;">::</span>
<span class="t m" style="left:596.57px;top:597.71px;color:#a31515;">'Payload Capacity'</span>
<span class="t m" style="left:700.29px;top:597.71px;color:#222222;">;</span>
<span class="t r" style="left:408.28px;top:611.48px;font-size:10.2px;color:#237893;font-family:"Liberation Mono",monospace;letter-spacing:-0.718px;">44</span>
<span class="t m" style="left:475.57px;top:612.11px;color:#0000ff;">doc</span>
<span class="t r" style="left:408.28px;top:625.88px;font-size:10.2px;color:#237893;font-family:"Liberation Mono",monospace;letter-spacing:-0.718px;">45</span>
<span class="t m" style="left:475.57px;top:626.51px;color:#008000;font-style:italic;">/**</span>
<span class="t r" style="left:408.28px;top:640.28px;font-size:10.2px;color:#237893;font-family:"Liberation Mono",monospace;letter-spacing:-0.718px;">46</span>
<span class="t m" style="left:481.33px;top:640.91px;color:#008000;font-style:italic;">Ensure vehicle can fly correctly considering the requirements.</span>
<span class="t r" style="left:408.28px;top:654.68px;font-size:10.2px;color:#237893;font-family:"Liberation Mono",monospace;letter-spacing:-0.718px;">47</span>
<span class="t m" style="left:481.33px;top:655.31px;color:#008000;font-style:italic;">*/</span>
<span class="t r" style="left:408.28px;top:669.08px;font-size:10.2px;color:#237893;font-family:"Liberation Mono",monospace;letter-spacing:-0.718px;">48</span>
<span class="t m" style="left:464.05px;top:669.71px;color:#222222;">}</span>
<span class="t r" style="left:408.28px;top:683.48px;font-size:10.2px;color:#237893;font-family:"Liberation Mono",monospace;letter-spacing:-0.718px;">49</span>
<span class="t r" style="left:408.28px;top:697.88px;font-size:10.2px;color:#237893;font-family:"Liberation Mono",monospace;letter-spacing:-0.718px;">50</span>
<span class="t m" style="left:452.52px;top:698.51px;color:#222222;">}</span>
<span class="t r" style="left:408.28px;top:712.28px;font-size:10.2px;color:#237893;font-family:"Liberation Mono",monospace;letter-spacing:-0.718px;">51</span>
<span class="t r" style="left:408.28px;top:726.68px;font-size:10.2px;color:#237893;font-family:"Liberation Mono",monospace;letter-spacing:-0.718px;">52</span>
<span class="t m" style="left:464.05px;top:727.31px;color:#0000ff;">part</span>
<span class="t m" style="left:498.62px;top:727.31px;color:#a31515;">vehicle</span>
<span class="t m" style="left:544.72px;top:727.31px;color:#222222;">{</span>
<span class="t r" style="left:408.28px;top:741.08px;font-size:10.2px;color:#0b216f;font-family:"Liberation Mono",monospace;letter-spacing:-0.718px;">53</span>
<span class="t r" style="left:408.28px;top:755.48px;font-size:10.2px;color:#237893;font-family:"Liberation Mono",monospace;letter-spacing:-0.718px;">54</span>
<span class="t r" style="left:408.28px;top:769.88px;font-size:10.2px;color:#237893;font-family:"Liberation Mono",monospace;letter-spacing:-0.718px;">55</span>
<span class="t m" style="left:464.05px;top:770.51px;color:#222222;">}</span>
<span class="t r" style="left:408.28px;top:784.28px;font-size:10.2px;color:#237893;font-family:"Liberation Mono",monospace;letter-spacing:-0.718px;">56</span>
<span class="t r" style="left:408.28px;top:798.68px;font-size:10.2px;color:#237893;font-family:"Liberation Mono",monospace;letter-spacing:-0.718px;">57</span>
<span class="t m" style="left:441.00px;top:799.31px;color:#222222;">}</span>
<div class="b" style="left:376.4px;top:241.8px;width:603.6px;height:43.4px;background:#ebebeb;"></div>
<div class="b" style="left:376.4px;top:285.2px;width:603.6px;height:3px;background:linear-gradient(rgba(0,0,0,.13),rgba(0,0,0,0));"></div>
<span class="t r" style="left:400.04px;top:243.38px;font-size:10.2px;color:#237893;font-family:"Liberation Mono",monospace;letter-spacing:-0.359px;">1</span>
<span class="t m" style="left:441.00px;top:244.01px;color:#0000ff;">package</span>
<span class="t m" style="left:487.10px;top:244.01px;color:#a31515;">Requirements</span>
<span class="t m" style="left:562.00px;top:244.01px;color:#222222;">{</span>
<span class="t r" style="left:394.28px;top:257.78px;font-size:10.2px;color:#237893;font-family:"Liberation Mono",monospace;letter-spacing:-0.718px;">17</span>
<span class="t m" style="left:452.52px;top:258.41px;color:#0000ff;">requirement</span>
<span class="t m" style="left:527.43px;top:258.41px;color:#a31515;">'Payload Capacity'</span>
<span class="t m" style="left:636.91px;top:258.41px;color:#222222;">{</span>
<span class="t r" style="left:394.28px;top:272.18px;font-size:10.2px;color:#237893;font-family:"Liberation Mono",monospace;letter-spacing:-0.718px;">18</span>
<span class="t m" style="left:464.05px;top:272.81px;color:#0000ff;">doc</span>
<div class="b" style="left:980px;top:241.8px;width:53.4px;height:795.2px;background:#eeeeee;border-left:1px solid #e7e7e7;"></div>
<svg class="b" style="left:980px;top:241.4px;" width="53" height="60" viewBox="0 0 53 60" preserveAspectRatio="none"><rect x="4.3" y="0.00" width="3.4" height=".95" fill="#0000ff" opacity=".36"/><rect x="8.2" y="0.00" width="5.9" height=".95" fill="#a31515" opacity=".36"/><rect x="14.6" y="0.00" width="0.5" height=".95" fill="#888" opacity=".16"/><rect x="5.3" y="2.03" width="5.4" height=".95" fill="#0000ff" opacity=".36"/><rect x="11.2" y="2.03" width="6.4" height=".95" fill="#a31515" opacity=".36"/><rect x="18.0" y="2.03" width="0.5" height=".95" fill="#888" opacity=".16"/><rect x="6.3" y="3.04" width="1.5" height=".95" fill="#0000ff" opacity=".36"/><rect x="6.3" y="4.06" width="1.0" height=".95" fill="#008000" opacity=".36"/><rect x="6.8" y="5.07" width="25.5" height=".95" fill="#008000" opacity=".36"/><rect x="6.8" y="6.09" width="1.0" height=".95" fill="#008000" opacity=".36"/><rect x="6.3" y="7.10" width="4.4" height=".95" fill="#0000ff" opacity=".36"/><rect x="11.2" y="7.10" width="4.4" height=".95" fill="#a31515" opacity=".36"/><rect x="16.1" y="7.10" width="1.0" height=".95" fill="#888" opacity=".16"/><rect x="17.0" y="7.10" width="2.9" height=".95" fill="#0000ff" opacity=".36"/><rect x="20.5" y="7.10" width="1.0" height=".95" fill="#888" opacity=".16"/><rect x="21.4" y="7.10" width="25.0" height=".95" fill="#a31515" opacity=".36"/><rect x="46.4" y="7.10" width="0.5" height=".95" fill="#888" opacity=".16"/><rect x="6.3" y="9.13" width="4.4" height=".95" fill="#0000ff" opacity=".36"/><rect x="11.2" y="9.13" width="4.9" height=".95" fill="#a31515" opacity=".36"/><rect x="16.6" y="9.13" width="1.0" height=".95" fill="#888" opacity=".16"/><rect x="17.5" y="9.13" width="6.4" height=".95" fill="#0000ff" opacity=".36"/><rect x="24.4" y="9.13" width="1.0" height=".95" fill="#888" opacity=".16"/><rect x="25.4" y="9.13" width="0.5" height=".95" fill="#098658" opacity=".36"/><rect x="26.4" y="9.13" width="0.5" height=".95" fill="#888" opacity=".16"/><rect x="26.8" y="9.13" width="0.5" height=".95" fill="#a31515" opacity=".36"/><rect x="27.3" y="9.13" width="1.0" height=".95" fill="#888" opacity=".16"/><rect x="5.3" y="10.15" width="0.5" height=".95" fill="#888" opacity=".16"/><rect x="5.3" y="16.24" width="5.4" height=".95" fill="#0000ff" opacity=".36"/><rect x="11.6" y="16.24" width="8.8" height=".95" fill="#a31515" opacity=".36"/><rect x="21.0" y="16.24" width="0.5" height=".95" fill="#888" opacity=".16"/><rect x="6.3" y="17.25" width="1.5" height=".95" fill="#0000ff" opacity=".36"/><rect x="6.3" y="18.27" width="1.0" height=".95" fill="#008000" opacity=".36"/><rect x="6.8" y="19.28" width="18.1" height=".95" fill="#008000" opacity=".36"/><rect x="6.8" y="20.30" width="1.0" height=".95" fill="#008000" opacity=".36"/><rect x="6.3" y="22.33" width="4.4" height=".95" fill="#0000ff" opacity=".36"/><rect x="11.2" y="22.33" width="5.4" height=".95" fill="#a31515" opacity=".36"/><rect x="17.0" y="22.33" width="1.0" height=".95" fill="#888" opacity=".16"/><rect x="18.0" y="22.33" width="4.4" height=".95" fill="#0000ff" opacity=".36"/><rect x="22.9" y="22.33" width="1.0" height=".95" fill="#888" opacity=".16"/><rect x="23.9" y="22.33" width="1.5" height=".95" fill="#098658" opacity=".36"/><rect x="25.9" y="22.33" width="0.5" height=".95" fill="#888" opacity=".16"/><rect x="26.4" y="22.33" width="1.0" height=".95" fill="#a31515" opacity=".36"/><rect x="27.3" y="22.33" width="1.0" height=".95" fill="#888" opacity=".16"/><rect x="5.3" y="23.34" width="0.5" height=".95" fill="#888" opacity=".16"/><rect x="5.3" y="25.37" width="5.4" height=".95" fill="#0000ff" opacity=".36"/><rect x="11.2" y="25.37" width="5.4" height=".95" fill="#a31515" opacity=".36"/><rect x="17.0" y="25.37" width="0.5" height=".95" fill="#888" opacity=".16"/><rect x="6.3" y="26.39" width="1.5" height=".95" fill="#0000ff" opacity=".36"/><rect x="6.3" y="27.40" width="1.0" height=".95" fill="#008000" opacity=".36"/><rect x="6.8" y="28.42" width="12.7" height=".95" fill="#008000" opacity=".36"/><rect x="6.8" y="29.43" width="1.0" height=".95" fill="#008000" opacity=".36"/><rect x="6.3" y="31.46" width="4.4" height=".95" fill="#0000ff" opacity=".36"/><rect x="11.2" y="31.46" width="3.9" height=".95" fill="#a31515" opacity=".36"/><rect x="15.6" y="31.46" width="1.0" height=".95" fill="#888" opacity=".16"/><rect x="16.6" y="31.46" width="2.9" height=".95" fill="#0000ff" opacity=".36"/><rect x="20.0" y="31.46" width="1.0" height=".95" fill="#888" opacity=".16"/><rect x="21.0" y="31.46" width="4.9" height=".95" fill="#a31515" opacity=".36"/><rect x="25.9" y="31.46" width="0.5" height=".95" fill="#888" opacity=".16"/><rect x="5.3" y="32.48" width="0.5" height=".95" fill="#888" opacity=".16"/><rect x="5.3" y="34.51" width="5.9" height=".95" fill="#0000ff" opacity=".36"/><rect x="12.1" y="34.51" width="6.4" height=".95" fill="#a31515" opacity=".36"/><rect x="19.0" y="34.51" width="0.5" height=".95" fill="#888" opacity=".16"/><rect x="6.3" y="35.52" width="2.9" height=".95" fill="#0000ff" opacity=".36"/><rect x="9.7" y="35.52" width="3.4" height=".95" fill="#a31515" opacity=".36"/><rect x="13.6" y="35.52" width="1.0" height=".95" fill="#888" opacity=".16"/><rect x="14.6" y="35.52" width="8.3" height=".95" fill="#0000ff" opacity=".36"/><rect x="22.9" y="35.52" width="1.0" height=".95" fill="#888" opacity=".16"/><rect x="23.9" y="35.52" width="5.4" height=".95" fill="#a31515" opacity=".36"/><rect x="29.8" y="35.52" width="1.0" height=".95" fill="#888" opacity=".16"/><rect x="30.8" y="35.52" width="8.3" height=".95" fill="#a31515" opacity=".36"/><rect x="39.1" y="35.52" width="1.0" height=".95" fill="#888" opacity=".16"/><rect x="40.1" y="35.52" width="5.4" height=".95" fill="#a31515" opacity=".36"/><rect x="45.5" y="35.52" width="1.0" height=".95" fill="#888" opacity=".16"/><rect x="46.4" y="35.52" width="2.0" height=".95" fill="#a31515" opacity=".36"/><rect x="48.4" y="35.52" width="0.5" height=".95" fill="#888" opacity=".16"/><rect x="6.3" y="36.54" width="3.9" height=".95" fill="#0000ff" opacity=".36"/><rect x="10.7" y="36.54" width="8.3" height=".95" fill="#a31515" opacity=".36"/><rect x="19.0" y="36.54" width="1.0" height=".95" fill="#888" opacity=".16"/><rect x="20.0" y="36.54" width="8.8" height=".95" fill="#a31515" opacity=".36"/><rect x="29.3" y="36.54" width="0.5" height=".95" fill="#888" opacity=".16"/><rect x="7.2" y="37.55" width="2.0" height=".95" fill="#a31515" opacity=".36"/><rect x="9.7" y="37.55" width="1.0" height=".95" fill="#888" opacity=".16"/><rect x="10.7" y="37.55" width="8.3" height=".95" fill="#a31515" opacity=".36"/><rect x="19.0" y="37.55" width="1.0" height=".95" fill="#888" opacity=".16"/><rect x="20.0" y="37.55" width="10.8" height=".95" fill="#a31515" opacity=".36"/><rect x="30.8" y="37.55" width="1.0" height=".95" fill="#888" opacity=".16"/><rect x="31.7" y="37.55" width="2.0" height=".95" fill="#a31515" opacity=".36"/><rect x="33.7" y="37.55" width="0.5" height=".95" fill="#888" opacity=".16"/><rect x="6.3" y="38.57" width="0.5" height=".95" fill="#888" opacity=".16"/><rect x="6.3" y="39.58" width="4.4" height=".95" fill="#0000ff" opacity=".36"/><rect x="11.2" y="39.58" width="0.5" height=".95" fill="#888" opacity=".16"/><rect x="7.2" y="40.60" width="2.9" height=".95" fill="#0000ff" opacity=".36"/><rect x="10.7" y="40.60" width="5.9" height=".95" fill="#a31515" opacity=".36"/><rect x="16.6" y="40.60" width="1.0" height=".95" fill="#888" opacity=".16"/><rect x="17.5" y="40.60" width="6.4" height=".95" fill="#a31515" opacity=".36"/><rect x="23.9" y="40.60" width="0.5" height=".95" fill="#888" opacity=".16"/><rect x="7.2" y="41.61" width="2.9" height=".95" fill="#0000ff" opacity=".36"/><rect x="10.7" y="41.61" width="5.9" height=".95" fill="#a31515" opacity=".36"/><rect x="16.6" y="41.61" width="1.0" height=".95" fill="#888" opacity=".16"/><rect x="17.5" y="41.61" width="5.4" height=".95" fill="#a31515" opacity=".36"/><rect x="22.9" y="41.61" width="0.5" height=".95" fill="#888" opacity=".16"/><rect x="7.2" y="42.63" width="2.9" height=".95" fill="#0000ff" opacity=".36"/><rect x="10.7" y="42.63" width="5.9" height=".95" fill="#a31515" opacity=".36"/><rect x="16.6" y="42.63" width="1.0" height=".95" fill="#888" opacity=".16"/><rect x="17.5" y="42.63" width="8.8" height=".95" fill="#a31515" opacity=".36"/><rect x="26.4" y="42.63" width="0.5" height=".95" fill="#888" opacity=".16"/><rect x="7.2" y="43.64" width="1.5" height=".95" fill="#0000ff" opacity=".36"/><rect x="7.2" y="44.66" width="1.5" height=".95" fill="#008000" opacity=".36"/><rect x="7.7" y="45.67" width="30.4" height=".95" fill="#008000" opacity=".36"/><rect x="7.7" y="46.69" width="1.0" height=".95" fill="#008000" opacity=".36"/><rect x="6.3" y="47.70" width="0.5" height=".95" fill="#888" opacity=".16"/><rect x="5.3" y="49.73" width="0.5" height=".95" fill="#888" opacity=".16"/><rect x="6.3" y="51.76" width="2.0" height=".95" fill="#0000ff" opacity=".36"/><rect x="9.2" y="51.76" width="3.4" height=".95" fill="#a31515" opacity=".36"/><rect x="13.1" y="51.76" width="0.5" height=".95" fill="#888" opacity=".16"/><rect x="6.3" y="54.81" width="0.5" height=".95" fill="#888" opacity=".16"/><rect x="4.3" y="56.84" width="0.5" height=".95" fill="#888" opacity=".16"/></svg>
<div class="b" style="left:1033.4px;top:241.8px;width:10.8px;height:795.2px;background:#eeeeee;border-left:1px solid #e2e2e2;"></div>
<div class="b" style="left:1033.6px;top:366.6px;width:10.6px;height:393.8px;background:#ababab;"></div>
<div class="b" style="left:1033.6px;top:612px;width:10.6px;height:1.6px;background:#555555;"></div>
<div class="b" style="left:440.6px;top:1027.4px;width:530.6px;height:9.6px;background:#b2b2b2;"></div>
<svg class="b" style="left:1036.6px;top:1029px;" width="8" height="8" viewBox="0 0 8 8" preserveAspectRatio="none"><path d="M1 7.5 7.5 1M4 7.5 7.5 4" stroke="#555" stroke-width=".9" fill="none"/></svg>
<svg class="b" style="left:573.6px;top:725.4px;" width="6" height="17" viewBox="0 0 6 17" preserveAspectRatio="none"><path d="M.5 .7c1.400 0 2.500.5 2.500 1.700 0-1.200 1.100-1.700 2.500-1.700M.5 16.300c1.400 0 2.500-.5 2.500-1.700 0 1.200 1.100 1.700 2.500 1.700M3 2.200v12.600" stroke="#111" stroke-width="1.150" fill="none"/></svg>
<!-- s_graph -->
<div class="b" style="left:1048.2px;top:203px;width:837.7px;height:834px;background:#eeeeee;"></div>
<svg class="b" style="left:1048.2px;top:203px;" width="837.7" height="834" viewBox="0 0 837.7 834" preserveAspectRatio="none"><defs><pattern id="dp" x="6.75" y="1.65" width="14.7" height="14.7" patternUnits="userSpaceOnUse"><circle cx="7.35" cy="7.35" r=".8" fill="#bdbdbd"/></pattern></defs><rect width="837.7" height="834" fill="url(#dp)"/></svg>
<div class="b" style="left:1086.6px;top:323.2px;width:761.4px;height:591.6px;background:rgba(255,255,255,.58);border:1px solid rgba(190,202,220,.42);border-radius:4px;"></div>
<div class="b" style="left:1087.2px;top:323.8px;width:760.2px;height:29.4px;background:#fdfdfd;border-radius:3.500px 3.500px 0 0;"></div>
<svg class="b" style="left:1092.4px;top:333.2px;" width="12" height="10.6" viewBox="0 0 12 10.6" preserveAspectRatio="none"><path d="M.7 2A1.2 1.2 0 0 1 1.9.8h2.7l1.3 1.5h4.3a1.2 1.2 0 0 1 1.2 1.2v5.2a1.2 1.2 0 0 1-1.2 1.2H1.9A1.2 1.2 0 0 1 .7 8.7z" fill="none" stroke="#111" stroke-width="1.25"/></svg>
<span class="t" style="left:1110.60px;top:333.44px;font-size:12.0px;color:#111;font-weight:700;letter-spacing:-0.275px;">Requirements</span>
<div class="b" style="left:1168.80px;top:651.00px;width:48.00px;height:20.4px;background:rgba(253,253,253,.72);border-radius:3px;"></div>
<span class="t r" style="left:1171.00px;top:656.39px;font-size:12.3px;color:#151515;letter-spacing:0.076px;">«verify»</span>
<div class="b" style="left:1444.90px;top:651.00px;width:47.90px;height:20.4px;background:rgba(253,253,253,.72);border-radius:3px;"></div>
<span class="t r" style="left:1447.10px;top:656.39px;font-size:12.3px;color:#151515;letter-spacing:0.062px;">«verify»</span>
<div class="b" style="left:1701.60px;top:651.00px;width:48.00px;height:20.4px;background:rgba(253,253,253,.72);border-radius:3px;"></div>
<span class="t r" style="left:1703.80px;top:656.39px;font-size:12.3px;color:#151515;letter-spacing:0.076px;">«verify»</span>
<svg class="b" style="left:1048px;top:203px;" width="838" height="834" viewBox="1048 203 838 834" preserveAspectRatio="none"><g fill="none" stroke="#74788a" stroke-width="1.35" stroke-linejoin="miter"><path d="M1669.8 627.500 V635.600 H1210.400 V684"/><path d="M1706.300 627.500 V642.900 H1486.100 V684"/><path d="M1743 627.500 V684"/></g></svg>
<div class="b" style="left:1471.4px;top:477.2px;width:147.0px;height:59.8px;background:#fdfdfd;border:1px solid #dee1e8;border-radius:7.5px;box-shadow:0 1px 3px rgba(0,0,0,.05);"></div>
<span class="t r" style="left:1535.10px;top:492.17px;font-size:10.7px;color:#606060;letter-spacing:0.321px;-webkit-text-stroke:.38px #606060;">part</span>
<svg class="b" style="left:1516.2px;top:510.6px;" width="12" height="12.6" viewBox="0 0 12 12.6" preserveAspectRatio="none"><path d="M6 .8 11.2 3.6v5.6L6 12 0.8 9.2V3.6zM.9 3.7 6 6.5l5.1-2.8M6 6.5V12" fill="none" stroke="#111" stroke-width="1.2" stroke-linejoin="round"/></svg>
<span class="t" style="left:1534.20px;top:512.14px;font-size:11.8px;color:#111111;font-weight:700;letter-spacing:-0.236px;">vehicle</span>
<div class="b" style="left:1633.2px;top:386.2px;width:146.6px;height:241.8px;background:#fdfdfd;border:1px solid #dee1e8;border-radius:7.5px;box-shadow:0 1px 3px rgba(0,0,0,.05);"></div>
<span class="t r" style="left:1678.80px;top:400.77px;font-size:10.7px;color:#606060;letter-spacing:0.387px;-webkit-text-stroke:.38px #606060;">verification</span>
<svg class="b" style="left:1669.8px;top:418.6px;" width="9.6" height="12.2" viewBox="0 0 9.6 12.2" preserveAspectRatio="none"><path d="M1.3 1.7h1.6a2 2 0 0 1 3.8 0h1.6A1.3 1.3 0 0 1 9.6 3v7.9a1.3 1.3 0 0 1-1.3 1.3H1.3A1.3 1.3 0 0 1 0 10.9V3a1.3 1.3 0 0 1 1.3-1.3z" fill="#111"/><circle cx="4.8" cy="2" r=".7" fill="#fdfdfd"/><path d="M2.7 7.4l1.5 1.5 2.8-3" stroke="#fdfdfd" stroke-width="1.2" fill="none"/></svg>
<span class="t" style="left:1685.00px;top:420.14px;font-size:11.8px;color:#111111;font-weight:700;letter-spacing:-0.205px;">Flight Test</span>
<span class="t r" style="left:1645.30px;top:448.42px;font-size:10.4px;color:#9b9b9b;letter-spacing:0.406px;-webkit-text-stroke:.32px #9b9b9b;">Objective</span>
<span class="t" style="left:1645.30px;top:468.52px;font-size:10.4px;color:#111111;font-weight:700;letter-spacing:-0.030px;">verify</span>
<span class="t r" style="left:1676.40px;top:468.52px;font-size:10.4px;color:#1c1c1c;font-style:italic;letter-spacing:0.024px;">Requirements</span>
<span class="t" style="left:1645.30px;top:486.32px;font-size:10.4px;color:#111111;font-weight:700;letter-spacing:-0.030px;">verify</span>
<span class="t r" style="left:1676.40px;top:486.32px;font-size:10.4px;color:#1c1c1c;font-style:italic;letter-spacing:0.024px;">Requirements</span>
<span class="t" style="left:1645.30px;top:504.32px;font-size:10.4px;color:#111111;font-weight:700;letter-spacing:-0.030px;">verify</span>
<span class="t r" style="left:1676.40px;top:504.32px;font-size:10.4px;color:#1c1c1c;font-style:italic;letter-spacing:0.024px;">Requirements</span>
<span class="t r" style="left:1645.30px;top:533.82px;font-size:10.4px;color:#9b9b9b;letter-spacing:0.443px;-webkit-text-stroke:.32px #9b9b9b;">Verification Method</span>
<div class="b" style="left:1645.3px;top:551.6px;width:33.8px;height:14.2px;background:#e3e0f4;border-radius:3px;"></div>
<span class="t" style="left:1651.30px;top:554.75px;font-size:8.5px;color:#4a3aa9;font-weight:700;letter-spacing:-0.041px;">TEST</span>
<span class="t r" style="left:1645.30px;top:584.02px;font-size:10.4px;color:#9b9b9b;letter-spacing:0.472px;-webkit-text-stroke:.32px #9b9b9b;">Verdict</span>
<svg class="b" style="left:1645.4px;top:603.4px;" width="10.4" height="10.4" viewBox="0 0 10.4 10.4" preserveAspectRatio="none"><circle cx="5.2" cy="5.2" r="5.2" fill="#21b14b"/><path d="M2.9 5.4l1.6 1.6 3-3.2" stroke="#fff" stroke-width="1.2" fill="none" stroke-linecap="round" stroke-linejoin="round"/></svg>
<span class="t r" style="left:1658.60px;top:604.01px;font-size:10.0px;color:#2db55b;letter-spacing:-0.277px;">Pass</span>
<div class="b" style="left:1108.2px;top:683.0px;width:204.8px;height:159.2px;background:#fdfdfd;border:1px solid #dee1e8;border-radius:7.5px;box-shadow:0 1px 3px rgba(0,0,0,.05);"></div>
<span class="t r" style="left:1180.60px;top:698.17px;font-size:10.7px;color:#606060;letter-spacing:0.290px;-webkit-text-stroke:.38px #606060;">requirement</span>
<svg class="b" style="left:1155.2px;top:715.6px;" width="9.6" height="12.4" viewBox="0 0 9.6 12.6" preserveAspectRatio="none"><path d="M2 .8h3.700l3.100 3.100v6.700a1.300 1.300 0 0 1-1.300 1.300H2A1.300 1.300 0 0 1 .8 10.600V2.100A1.300 1.300 0 0 1 2 .8z" fill="none" stroke="#111" stroke-width="1.500"/><path d="M5.500.8v3.300h3.300z" fill="#111"/><path d="M2.900 6.700h3.800M2.900 8.300h3.800M2.900 9.900h2.400" stroke="#111" stroke-width=".95"/></svg>
<span class="t" style="left:1170.00px;top:716.94px;font-size:11.8px;color:#111111;font-weight:700;letter-spacing:-0.115px;">Payload Capacity</span>
<span class="t r" style="left:1120.70px;top:746.02px;font-size:10.4px;color:#9b9b9b;letter-spacing:0.516px;-webkit-text-stroke:.32px #9b9b9b;">doc</span>
<span class="t r" style="left:1120.70px;top:766.52px;font-size:10.4px;color:#3c3c3c;letter-spacing:0.086px;">UAS shall support a payload of 100kg.</span>
<span class="t r" style="left:1120.70px;top:794.62px;font-size:10.4px;color:#9b9b9b;letter-spacing:0.563px;-webkit-text-stroke:.32px #9b9b9b;">Attributes</span>
<span class="t" style="left:1120.70px;top:814.72px;font-size:10.4px;color:#111111;font-weight:700;letter-spacing:-0.032px;">payloadMass</span>
<span class="t r" style="left:1185.70px;top:814.72px;font-size:10.4px;color:#222;letter-spacing:0.029px;"> : MassValue = 100 [kg]</span>
<div class="b" style="left:1327.2px;top:683.0px;width:318.4px;height:211.2px;background:#fdfdfd;border:1px solid #dee1e8;border-radius:7.5px;box-shadow:0 1px 3px rgba(0,0,0,.05);"></div>
<span class="t r" style="left:1456.10px;top:698.17px;font-size:10.7px;color:#606060;letter-spacing:0.290px;-webkit-text-stroke:.38px #606060;">requirement</span>
<svg class="b" style="left:1447.0px;top:715.6px;" width="9.6" height="12.4" viewBox="0 0 9.6 12.6" preserveAspectRatio="none"><path d="M2 .8h3.700l3.100 3.100v6.700a1.300 1.300 0 0 1-1.300 1.300H2A1.300 1.300 0 0 1 .8 10.600V2.100A1.300 1.300 0 0 1 2 .8z" fill="none" stroke="#111" stroke-width="1.500"/><path d="M5.500.8v3.300h3.300z" fill="#111"/><path d="M2.900 6.700h3.800M2.900 8.300h3.800M2.900 9.900h2.400" stroke="#111" stroke-width=".95"/></svg>
<span class="t" style="left:1462.80px;top:716.94px;font-size:11.8px;color:#111111;font-weight:700;letter-spacing:-0.160px;">Loiter Time</span>
<span class="t r" style="left:1339.60px;top:746.02px;font-size:10.4px;color:#9b9b9b;letter-spacing:0.516px;-webkit-text-stroke:.32px #9b9b9b;">doc</span>
<span class="t r" style="left:1339.60px;top:766.52px;font-size:10.4px;color:#3c3c3c;letter-spacing:0.087px;">UAS shall have a loiter time of 5 hours over target.</span>
<span class="t r" style="left:1339.60px;top:794.62px;font-size:10.4px;color:#9b9b9b;letter-spacing:0.207px;-webkit-text-stroke:.32px #9b9b9b;">Rationale</span>
<span class="t r" style="left:1339.60px;top:815.72px;font-size:10.4px;color:#3c3c3c;letter-spacing:0.146px;">UAS must spend enough time over target to observe activities</span>
<span class="t r" style="left:1339.60px;top:846.62px;font-size:10.4px;color:#9b9b9b;letter-spacing:0.563px;-webkit-text-stroke:.32px #9b9b9b;">Attributes</span>
<span class="t" style="left:1339.60px;top:866.72px;font-size:10.4px;color:#111111;font-weight:700;letter-spacing:-0.011px;">loiterTime</span>
<span class="t r" style="left:1389.20px;top:866.72px;font-size:10.4px;color:#222;letter-spacing:0.084px;"> : DurationValue = 5 [h]</span>
<div class="b" style="left:1660.4px;top:683.0px;width:165.2px;height:159.2px;background:#fdfdfd;border:1px solid #dee1e8;border-radius:7.5px;box-shadow:0 1px 3px rgba(0,0,0,.05);"></div>
<span class="t r" style="left:1713.00px;top:698.17px;font-size:10.7px;color:#606060;letter-spacing:0.290px;-webkit-text-stroke:.38px #606060;">requirement</span>
<svg class="b" style="left:1708.4px;top:715.6px;" width="9.6" height="12.4" viewBox="0 0 9.6 12.6" preserveAspectRatio="none"><path d="M2 .8h3.700l3.100 3.100v6.700a1.300 1.300 0 0 1-1.300 1.300H2A1.300 1.300 0 0 1 .8 10.600V2.100A1.300 1.300 0 0 1 2 .8z" fill="none" stroke="#111" stroke-width="1.500"/><path d="M5.500.8v3.300h3.300z" fill="#111"/><path d="M2.900 6.700h3.800M2.900 8.300h3.800M2.900 9.900h2.400" stroke="#111" stroke-width=".95"/></svg>
<span class="t" style="left:1724.00px;top:716.94px;font-size:11.8px;color:#111111;font-weight:700;letter-spacing:-0.210px;">Fuel Type</span>
<span class="t r" style="left:1672.60px;top:746.02px;font-size:10.4px;color:#9b9b9b;letter-spacing:0.516px;-webkit-text-stroke:.32px #9b9b9b;">doc</span>
<span class="t r" style="left:1672.60px;top:766.52px;font-size:10.4px;color:#3c3c3c;letter-spacing:0.077px;">UAS shall support gasoline</span>
<span class="t r" style="left:1672.60px;top:794.62px;font-size:10.4px;color:#9b9b9b;letter-spacing:0.563px;-webkit-text-stroke:.32px #9b9b9b;">Attributes</span>
<span class="t" style="left:1672.60px;top:814.72px;font-size:10.4px;color:#111111;font-weight:700;letter-spacing:0.005px;">fuelType</span>
<span class="t r" style="left:1715.40px;top:814.72px;font-size:10.4px;color:#222;letter-spacing:0.199px;"> : String = "gasoline"</span>
<div class="b" style="left:1060.3px;top:215.8px;width:208.2px;height:44.6px;background:#fdfdfd;border-radius:5px;box-shadow:0 3px 8px rgba(0,0,0,.13),0 1px 2px rgba(0,0,0,.08);"></div>
<span class="t" style="left:1070.20px;top:232.93px;font-size:11.2px;color:#151515;font-weight:700;letter-spacing:-0.213px;">View:</span>
<div class="b" style="left:1105.3px;top:225.3px;width:153.4px;height:25.3px;background:#fdfdfd;border:1px solid #dedede;border-radius:3.5px;"></div>
<span class="t r" style="left:1115.60px;top:232.83px;font-size:11.4px;color:#151515;letter-spacing:-0.076px;">General View</span>
<svg class="b" style="left:1238.6px;top:236.6px;" width="7" height="4.2" viewBox="0 0 7 4.2" preserveAspectRatio="none"><path d="M0 .1h7L3.5 4.1z" fill="#151515"/></svg>
<div class="b" style="left:1060px;top:274.2px;width:38px;height:37.8px;background:#3b2a96;border-radius:3.500px;box-shadow:0 3px 8px rgba(0,0,0,.17),0 1px 3px rgba(0,0,0,.12);"></div>
<svg class="b" style="left:1073px;top:287px;" width="12" height="12" viewBox="0 0 12 12" preserveAspectRatio="none"><path d="M6 .4v11.2M.4 6h11.2" stroke="#fff" stroke-width="1.7" fill="none"/></svg>
<div class="b" style="left:1784px;top:214.8px;width:38.5px;height:38.5px;background:#fdfdfd;border-radius:3.5px;box-shadow:0 3px 8px rgba(0,0,0,.13),0 1px 3px rgba(0,0,0,.10);"></div>
<svg class="b" style="left:1795.2px;top:227px;" width="16.4" height="14.4" viewBox="0 0 16.4 14.4" preserveAspectRatio="none"><path d="M8.4.2c4.4 0 8 2.7 8 6.1s-3.6 6.1-8 6.1c-1.1 0-2.1-.2-3-.4C4.300 13 2.400 14 .3 14.200c.9-1 1.600-2.300 1.800-3.400C.9 9.600.4 8 .4 6.300.4 2.900 4 .2 8.400.2z" fill="#3b2a96"/><circle cx="4.9" cy="6.3" r=".95" fill="#fff"/><circle cx="8.4" cy="6.3" r=".95" fill="#fff"/><circle cx="11.9" cy="6.3" r=".95" fill="#fff"/></svg>
<div class="b" style="left:1835.5px;top:214.8px;width:38.5px;height:38.5px;background:#3b2a96;border-radius:3.5px;box-shadow:0 3px 8px rgba(0,0,0,.17),0 1px 3px rgba(0,0,0,.12);"></div>
<svg class="b" style="left:1848.4px;top:226.2px;" width="12.8" height="16.4" viewBox="0 0 12.8 16.4" preserveAspectRatio="none"><path d="M1.7 2.4h2.2a2.600 2.600 0 0 1 5 0h2.200a1.700 1.700 0 0 1 1.700 1.700v10.600a1.700 1.700 0 0 1-1.700 1.700H1.700A1.700 1.700 0 0 1 0 14.700V4.100A1.700 1.700 0 0 1 1.700 2.400z" fill="#fff"/><circle cx="6.4" cy="2.6" r=".9" fill="#3b2a96"/><path d="M3.4 9.800l2.100 2.100 4-4.300" stroke="#3b2a96" stroke-width="1.6" fill="none"/></svg>
<div class="b" style="left:1713.9px;top:905px;width:136.6px;height:125px;background:#eeeeee;"></div>
<div class="b" style="left:1737.4px;top:908.6px;width:113px;height:112.6px;background:#fdfdfd;"></div>
<div class="b" style="left:1742.4px;top:925px;width:103.4px;height:80px;background:#7fe5e5;"></div>
<div class="b" style="left:1060px;top:942px;width:20.8px;height:83.2px;background:#3b2a96;"></div>
<div class="b" style="left:1060px;top:962.4px;width:20.8px;height:0.9px;background:#a9a58c;"></div>
<div class="b" style="left:1060px;top:983.2px;width:20.8px;height:0.9px;background:#a9a58c;"></div>
<div class="b" style="left:1060px;top:1004.2px;width:20.8px;height:0.9px;background:#a9a58c;"></div>
<svg class="b" style="left:1064.9px;top:946.8px;" width="11" height="11" viewBox="0 0 11 11" preserveAspectRatio="none"><path d="M5.5.6v9.8M.6 5.5h9.800" stroke="#fff" stroke-width="1.3" fill="none"/></svg>
<svg class="b" style="left:1064.9px;top:967.4px;" width="11" height="11" viewBox="0 0 11 11" preserveAspectRatio="none"><path d="M.6 5.5h9.800" stroke="#fff" stroke-width="1.3" fill="none"/></svg>
<svg class="b" style="left:1065.4px;top:988.6px;" width="10" height="10" viewBox="0 0 10 10" preserveAspectRatio="none"><path d="M.7 3V1.6A.9.9 0 0 1 1.600.700H3M7 .700h1.400a.9.9 0 0 1 .9.9V3M9.300 7v1.400a.9.9 0 0 1-.9.9H7M3 9.300H1.600a.9.9 0 0 1-.9-.9V7" stroke="#fff" stroke-width="1.25" fill="none"/></svg>
<svg class="b" style="left:1066.2px;top:1009.4px;" width="8.4" height="10.4" viewBox="0 0 8.4 10.4" preserveAspectRatio="none"><path d="M1.700 4.600V3.200a2.500 2.500 0 0 1 5-.6" stroke="#fff" stroke-width="1.200" fill="none"/><rect x="0" y="4.400" width="8.400" height="6" rx="1" fill="#fff"/><circle cx="4.200" cy="7.400" r="1" fill="#3b2a96"/></svg>
<!-- s_footer -->
<div class="b" style="left:0px;top:1037px;width:1905.2px;height:43px;background:#2e2850;"></div>
<span class="t r" style="left:725.50px;top:1053.53px;font-size:11.6px;color:#ffffff;letter-spacing:0.078px;">SysGit - Let's build the future together.</span>
<span class="t r" style="left:933.30px;top:1053.53px;font-size:11.6px;color:#ffffff;letter-spacing:0.197px;">Copyright © 2025</span>
<span class="t r" style="left:1033.80px;top:1053.53px;font-size:11.6px;color:#ffffff;letter-spacing:-0.006px;">Version: main.f7392dbb</span>
<svg class="b" style="left:1162.6px;top:1051.2px;" width="17.6" height="15.8" viewBox="0 0 17.6 15.8" preserveAspectRatio="none"><circle cx="1.9" cy="1.9" r="1.9" fill="#fff"/><rect x=".3" y="5.2" width="3.2" height="10.6" fill="#fff"/><path d="M6.200 5.200h3.100v1.500c.6-1.100 1.900-1.800 3.500-1.800 3.500 0 4.500 2.100 4.500 5.200v5.700h-3.300v-5.100c0-1.500-.3-2.800-2.100-2.800-1.800 0-2.400 1.300-2.400 2.800v5.100H6.200z" fill="#fff"/></svg>
<svg class="b" style="left:1857.00px;top:1032.00px;" width="38.8" height="38.8" viewBox="0 0 40 40" preserveAspectRatio="none"><defs><clipPath id="bc"><circle cx="20" cy="20" r="16.800"/></clipPath><linearGradient id="sky" x1="0" y1="0" x2="0" y2="1"><stop offset=".1" stop-color="#6fd0f7"/><stop offset=".28" stop-color="#dff2c4"/><stop offset=".4" stop-color="#fcd6a0"/><stop offset=".54" stop-color="#fba56e"/><stop offset=".66" stop-color="#f97c76"/></linearGradient><linearGradient id="ring" x1="0" y1="0" x2="1" y2="0"><stop offset="0" stop-color="#7fd446"/><stop offset=".5" stop-color="#cfd85c"/><stop offset="1" stop-color="#f39a3e"/></linearGradient><linearGradient id="ring2" x1="0" y1="0" x2="0" y2="1"><stop offset=".55" stop-color="#a2cc16" stop-opacity="0"/><stop offset=".85" stop-color="#a2cc16"/></linearGradient><linearGradient id="isl" x1="1" y1="0" x2="0" y2="1"><stop offset=".2" stop-color="#f2f400"/><stop offset=".8" stop-color="#6fae10"/></linearGradient></defs><circle cx="20" cy="20" r="20" fill="url(#ring)"/><circle cx="20" cy="20" r="20" fill="url(#ring2)"/><g clip-path="url(#bc)"><rect x="0" y="0" width="40" height="40" fill="url(#sky)"/><circle cx="32" cy="11" r="5.200" fill="#fdb417"/><path d="M24.500 5v1.600M24.500 8v1.600M24.700 11.400l.4 1.600M25.700 14.600l.9 1.400M27.600 17l1.400 1M30.200 18.600l1.700.4" stroke="#f08a2c" stroke-width="1.200" fill="none"/><rect x="3" y="25.600" width="34" height="3.200" fill="#12b5d8"/><path d="M5 28.800h9l-3.500 3.400zM26 28.800h9l-4 3.400z" fill="#147ea3"/><ellipse cx="20.500" cy="34.500" rx="11.800" ry="9" fill="url(#isl)"/><path d="M14.400 26.800c.9-3.600 1-7.600.4-10.600l2.400-.2c.8 3.200 1 7.400.8 10.800z" fill="#7a2e12"/><path transform="translate(0 -1.600)" d="M15.600 17.200c-3.600-2.800-7.600-1.400-8.800 1.600-.6 2.400 0 4.200.8 5.400.4-1.800 1.200-3 2.600-3.800-.8 1.800-.6 3.400 0 5 .8-2.400 2.400-4.200 4.600-5.200 1.600.4 3 1.400 3.800 3.200.6-1.200.6-2.400.2-3.600 1.400.6 2.400 1.800 2.800 3.400.8-3.200-.4-5.600-2.800-6.600 1.600-.6 3-.2 4.200.8-1-2.600-3.200-3.400-5.400-2.600.2-1.400-.6-2.400-1.800-3-1.400.6-2 1.800-2 3.200-2.400-.6-4.400.2-5.400 2.200 2.200-.6 4.600-.6 7.200 0z" fill="#1f9a1d"/><path d="M17.800 22.600l1.800 4.400M20.400 24.400l4.800 1.600 2.200 1.800" stroke="#e52d5a" stroke-width="1.300" fill="none"/><path d="M22.400 25.200l5 .6 1.200 2.400z" fill="#f339a4"/></g></svg>
</div></body></html>
